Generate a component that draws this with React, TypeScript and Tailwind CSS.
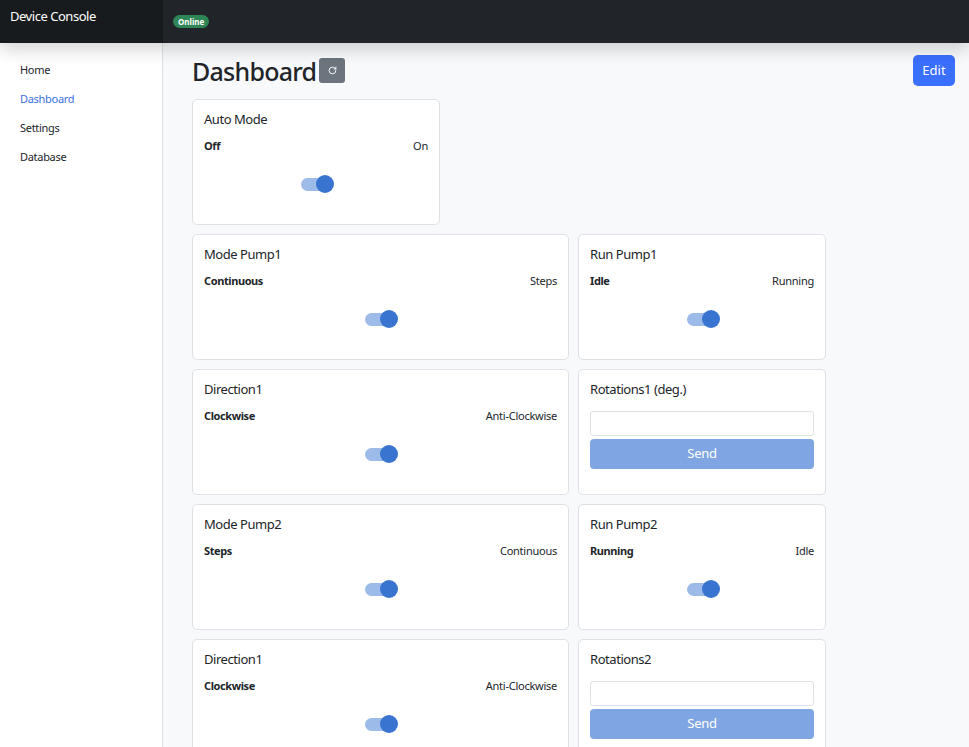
import React from 'react';
import { RotateCw } from 'lucide-react';

const navItems = ['Home', 'Dashboard', 'Settings', 'Database'];

const Toggle = () => (
  <div className="relative w-[33px] h-[18px] flex items-center mx-auto translate-x-[1px]">
    <div className="w-[32px] h-[13px] rounded-full bg-[#9dbbe9]" />
    <div className="absolute right-0 top-0 w-[18px] h-[18px] rounded-full bg-[#3874d0]" />
  </div>
);

const ToggleCard = ({ title, left, right }: { title: string; left: string; right: string }) => (
  <div className="h-[126px] bg-white border border-[#dee2e6] rounded-[5px] px-[11px] pt-[9px]">
    <h5 className="text-[13px] tracking-[-0.45px] leading-[20px] font-normal text-[#212529]">{title}</h5>
    <div className="flex justify-between mt-[7px] text-[11px] tracking-[-0.25px] leading-[20px] text-[#212529]">
      <span className="font-bold tracking-[-0.4px]">{left}</span>
      <span>{right}</span>
    </div>
    <div className="mt-[19px]">
      <Toggle />
    </div>
  </div>
);

const InputCard = ({ title }: { title: string }) => (
  <div className="h-[126px] bg-white border border-[#dee2e6] rounded-[5px] px-[11px] pt-[9px]">
    <h5 className="text-[13px] tracking-[-0.45px] leading-[20px] font-normal text-[#212529]">{title}</h5>
    <input className="block w-full h-[25px] mt-[12px] bg-white border border-[#dee2e6] rounded-[3px]" />
    <button className="block w-full h-[30px] mt-[3px] rounded-[4px] bg-[#7fa5e3] text-white text-[13px] tracking-[-0.3px]">Send</button>
  </div>
);

const App = () => {
  return (
    <div className="h-[747px] w-[969px] overflow-hidden flex flex-col bg-[#f8f9fa] font-['Noto_Sans','Open_Sans',sans-serif]">
      {/* Header */}
      <header className="relative z-10 h-[43px] shrink-0 flex bg-[#212529] shadow-[0_8px_16px_rgba(0,0,0,0.15)]">
        <div className="w-[163px] bg-[#181b1e] pl-[10px] pt-[6px] text-[13px] tracking-[-0.47px] leading-[20px] text-white">Device Console</div>
        <div className="pl-[10px] pt-[15px]">
          <span className="block h-[13px] px-[5px] rounded-full bg-[#2e8555] text-white text-[8px] leading-[13px] font-bold">Online</span>
        </div>
      </header>

      <div className="flex flex-1 min-h-0">
        {/* Sidebar */}
        <aside className="w-[163px] shrink-0 bg-white border-r border-[#dee2e6] pt-[12px] pl-[20px]">
          {navItems.map((item) => (
            <div
              key={item}
              className={`h-[29px] text-[11px] tracking-[-0.3px] leading-[29px] ${item === 'Dashboard' ? 'text-[#3b6fe0]' : 'text-[#212529]'}`}
            >
              {item}
            </div>
          ))}
        </aside>

        {/* Main */}
        <main className="flex-1 pl-[29px] pr-[14px]">
          <div className="flex justify-between h-[56px] pt-[12px]">
            <div className="flex items-start">
              <h1 className="text-[25px] tracking-[-0.75px] leading-[33px] font-medium text-[#212529]">Dashboard</h1>
              <button className="w-[26px] h-[25px] ml-[3px] mt-[3px] rounded-[3px] bg-[#6c757d] flex items-center justify-center text-white">
                <RotateCw size={9} strokeWidth={2.5} />
              </button>
            </div>
            <button className="w-[42px] h-[31px] rounded-[5px] bg-[#3b6ffd] text-white text-[13px]">Edit</button>
          </div>

          <div className="grid grid-cols-[377px_248px] gap-[9px]">
            <div className="col-span-2 w-[248px]">
              <ToggleCard title="Auto Mode" left="Off" right="On" />
            </div>
            <ToggleCard title="Mode Pump1" left="Continuous" right="Steps" />
            <ToggleCard title="Run Pump1" left="Idle" right="Running" />
            <ToggleCard title="Direction1" left="Clockwise" right="Anti-Clockwise" />
            <InputCard title="Rotations1 (deg.)" />
            <ToggleCard title="Mode Pump2" left="Steps" right="Continuous" />
            <ToggleCard title="Run Pump2" left="Running" right="Idle" />
            <ToggleCard title="Direction1" left="Clockwise" right="Anti-Clockwise" />
            <InputCard title="Rotations2" />
          </div>
        </main>
      </div>
    </div>
  );
};

export default App;
